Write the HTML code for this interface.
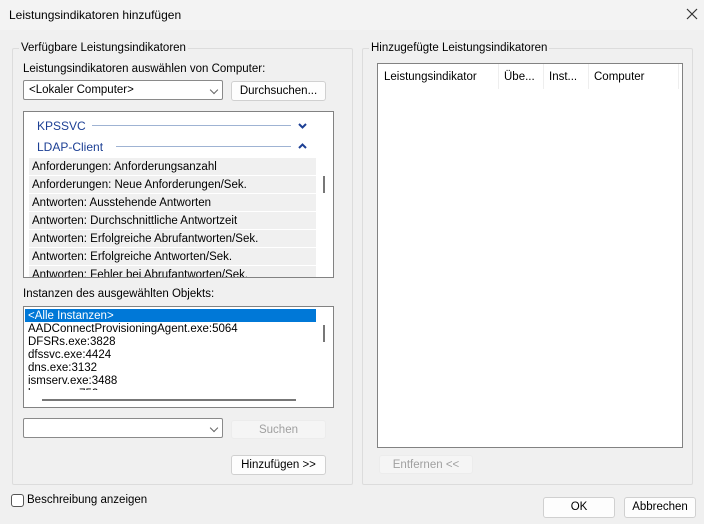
<!DOCTYPE html>
<html><head><meta charset="utf-8"><style>
*{box-sizing:border-box;margin:0;padding:0}
body{width:704px;height:524px;background:#f0f0f0;font-family:"Liberation Sans",sans-serif;font-size:11.5px;color:#000;position:relative;overflow:hidden}
.a{position:absolute;white-space:nowrap}
.grp{position:absolute;border:1px solid #dcdcdc;border-radius:2px}
.leg{position:absolute;background:#f0f0f0;padding:0 2px;top:-8px}
.btn{position:absolute;background:#fdfdfd;border:1px solid #d0d0d0;border-radius:3px;text-align:center;line-height:18px}
.dis{background:#f5f5f5;border-color:#ececec;color:#a0a0a0}
.combo{position:absolute;background:#fff;border:1px solid #8a8a8a;border-radius:2px;padding-left:5px;line-height:18px}
.chev{position:absolute;right:5px;top:6px;width:6px;height:6px;border-right:1px solid #666;border-bottom:1px solid #666;transform:rotate(45deg)}
.it{position:absolute;left:5px;width:287px;height:17px;background:#f0f0f0;padding-left:3px;line-height:19px}
.in{position:absolute;left:4px;line-height:14px}
</style></head><body>
<div class="a" style="left:0;top:0;width:704px;height:30px;background:#f3f3f3"></div>
<div class="a" style="left:9px;top:8px;font-size:12px">Leistungsindikatoren hinzufügen</div>
<svg class="a" style="left:686px;top:8px" width="12" height="12"><path d="M1 1L11 11M11 1L1 11" stroke="#333" stroke-width="1.2"/></svg>

<div class="grp" style="left:12px;top:48px;width:341px;height:437px"><div class="leg" style="left:6px;top:-7px">Verfügbare Leistungsindikatoren</div></div>
<div class="a" style="left:23px;top:63px">Leistungsindikatoren auswählen von Computer:</div>
<div class="combo" style="left:23px;top:80px;width:200px;height:20px">&lt;Lokaler Computer&gt;<div class="chev"></div></div>
<div class="btn" style="left:231px;top:81px;width:95px;height:20px">Durchsuchen...</div>

<div class="a" style="left:23px;top:111px;width:311px;height:167px;background:#fff;border:1px solid #828282;overflow:hidden">
 <div class="a" style="left:13px;top:7px;color:#1c3f94;font-size:12px">KPSSVC</div>
 <div class="a" style="left:68px;top:13px;width:199px;height:1px;background:#9fb3d3"></div>
 <svg class="a" style="left:274px;top:11px" width="9" height="6"><path d="M1 1L4.5 4.5L8 1" stroke="#1c3f94" stroke-width="2" fill="none"/></svg>
 <div class="a" style="left:13px;top:28px;color:#1c3f94;font-size:12px">LDAP-Client</div>
 <div class="a" style="left:92px;top:34px;width:175px;height:1px;background:#9fb3d3"></div>
 <svg class="a" style="left:274px;top:31px" width="9" height="6"><path d="M1 5L4.5 1.5L8 5" stroke="#1c3f94" stroke-width="2" fill="none"/></svg>
 <div class="it" style="top:46px">Anforderungen: Anforderungsanzahl</div>
 <div class="it" style="top:64px">Anforderungen: Neue Anforderungen/Sek.</div>
 <div class="it" style="top:82px">Antworten: Ausstehende Antworten</div>
 <div class="it" style="top:100px">Antworten: Durchschnittliche Antwortzeit</div>
 <div class="it" style="top:118px">Antworten: Erfolgreiche Abrufantworten/Sek.</div>
 <div class="it" style="top:136px">Antworten: Erfolgreiche Antworten/Sek.</div>
 <div class="it" style="top:154px">Antworten: Fehler bei Abrufantworten/Sek.</div>
 <div class="a" style="left:299px;top:64px;width:2px;height:17px;background:#777"></div>
</div>

<div class="a" style="left:23px;top:288px">Instanzen des ausgewählten Objekts:</div>
<div class="a" style="left:23px;top:306px;width:311px;height:102px;background:#fff;border:1px solid #828282;overflow:hidden">
 <div class="a" style="left:1px;top:2px;width:291px;height:13px;background:#0078d7"></div>
 <div class="in" style="top:2px;color:#fff">&lt;Alle Instanzen&gt;</div>
 <div class="in" style="top:15px">AADConnectProvisioningAgent.exe:5064</div>
 <div class="in" style="top:28px">DFSRs.exe:3828</div>
 <div class="in" style="top:41px">dfssvc.exe:4424</div>
 <div class="in" style="top:54px">dns.exe:3132</div>
 <div class="in" style="top:67px">ismserv.exe:3488</div>
 <div class="in" style="top:80px">lsass.exe:752</div>
 <div class="a" style="left:0;top:83px;width:309px;height:17px;background:#fff"></div>
 <div class="a" style="left:18px;top:92px;width:254px;height:2px;background:#777"></div>
 <div class="a" style="left:299px;top:18px;width:2px;height:17px;background:#777"></div>
</div>

<div class="combo" style="left:23px;top:418px;width:200px;height:20px"><div class="chev"></div></div>
<div class="btn dis" style="left:231px;top:420px;width:95px;height:19px">Suchen</div>
<div class="btn" style="left:231px;top:455px;width:95px;height:20px">Hinzufügen &gt;&gt;</div>

<div class="a" style="left:11px;top:494px;width:13px;height:13px;border:1px solid #555;border-radius:3px;background:#fff"></div>
<div class="a" style="left:27px;top:494px">Beschreibung anzeigen</div>

<div class="grp" style="left:362px;top:48px;width:331px;height:437px"><div class="leg" style="left:6px;top:-7px">Hinzugefügte Leistungsindikatoren</div></div>
<div class="a" style="left:377px;top:63px;width:306px;height:385px;background:#fff;border:1px solid #828282">
 <div class="a" style="left:6px;top:7px">Leistungsindikator</div>
 <div class="a" style="left:126px;top:7px">Übe...</div>
 <div class="a" style="left:171px;top:7px">Inst...</div>
 <div class="a" style="left:216px;top:7px">Computer</div>
 <div class="a" style="left:120px;top:0;width:1px;height:25px;background:#eee"></div>
 <div class="a" style="left:165px;top:0;width:1px;height:25px;background:#eee"></div>
 <div class="a" style="left:210px;top:0;width:1px;height:25px;background:#eee"></div>
 <div class="a" style="left:300px;top:0;width:1px;height:25px;background:#eee"></div>
</div>
<div class="btn dis" style="left:379px;top:455px;width:94px;height:19px">Entfernen &lt;&lt;</div>

<div class="btn" style="left:543px;top:497px;width:72px;height:21px">OK</div>
<div class="btn" style="left:624px;top:497px;width:72px;height:21px">Abbrechen</div>
</body></html>
